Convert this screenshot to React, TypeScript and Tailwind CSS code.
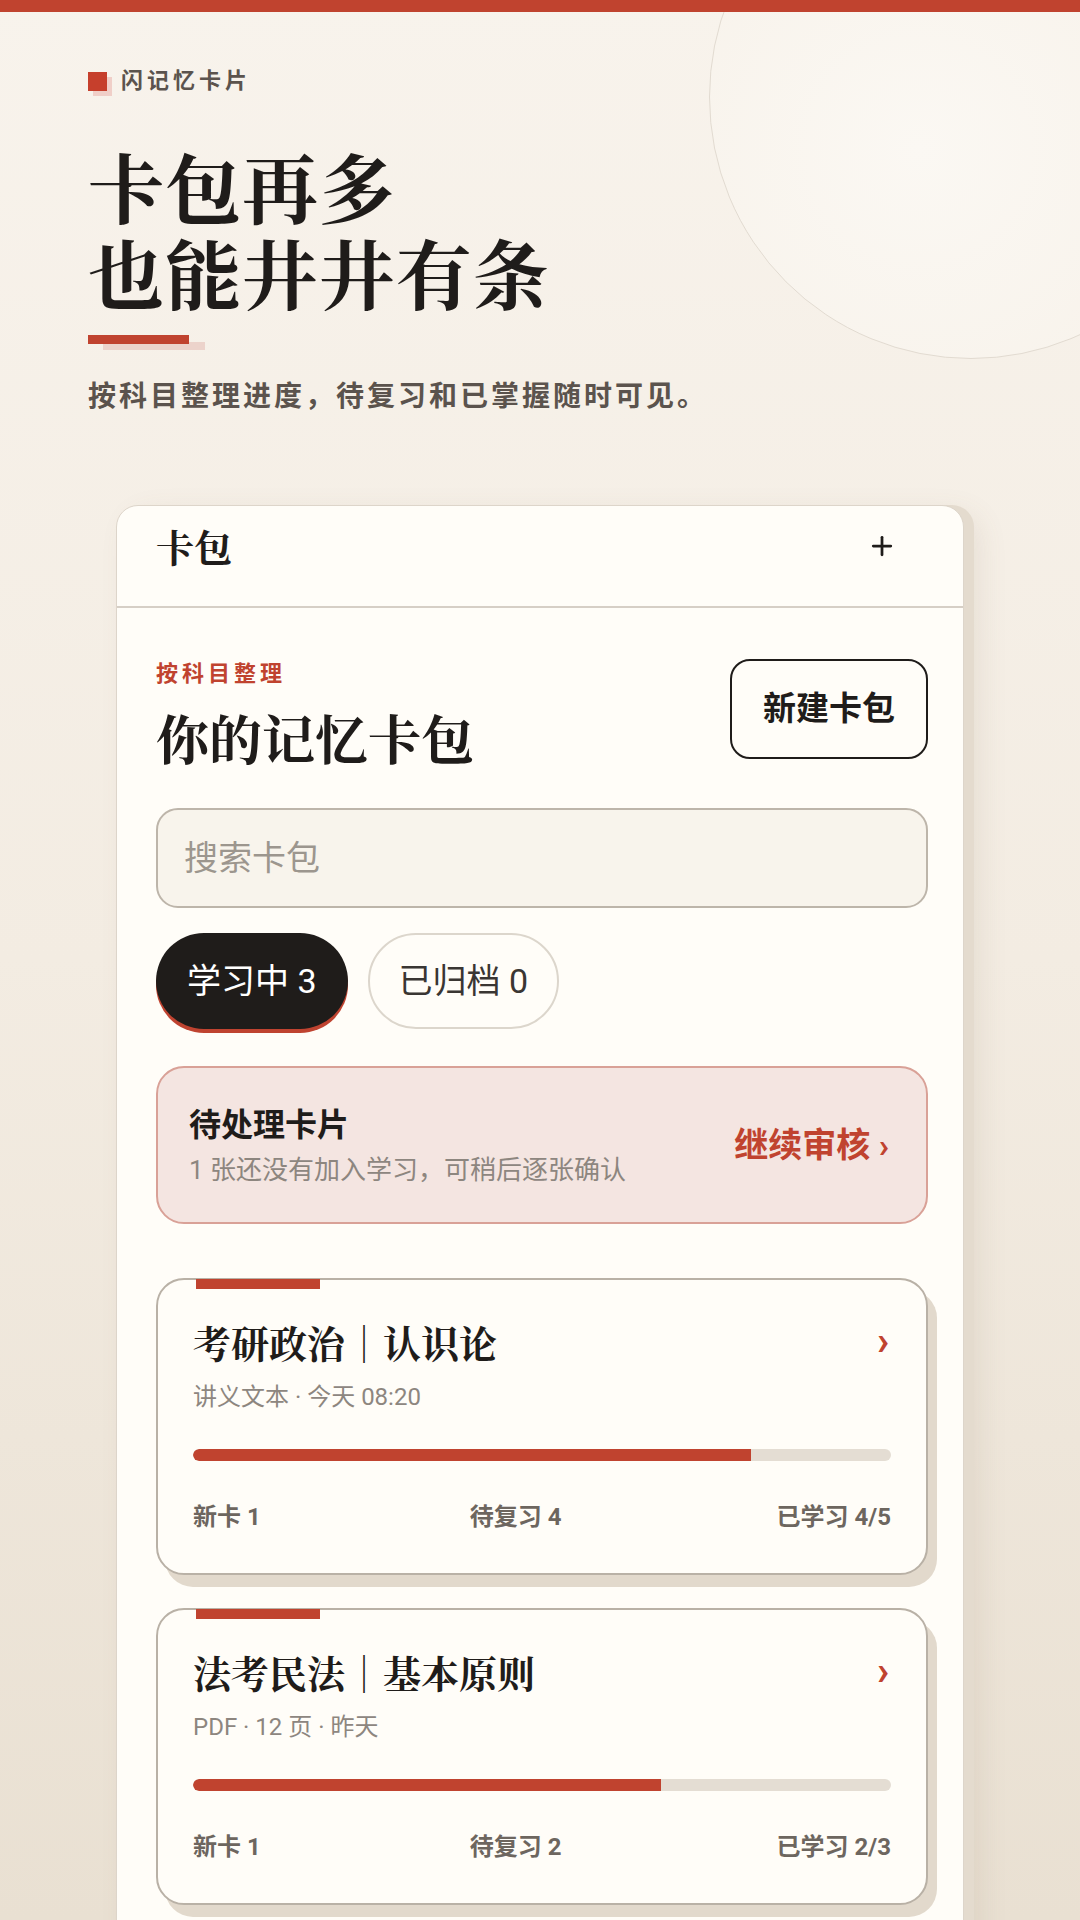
import { Plus } from 'lucide-react';

const sans = 'font-[Roboto,"Noto_Sans_CJK_SC",sans-serif]';
const serif = 'font-["Noto_Serif_CJK_SC","Source_Han_Serif_SC","Noto_Sans_CJK_SC",serif]';

const decks = [
  { title: '考研政治｜认识论', meta: '讲义文本 · 今天 08:20', progress: 80, fresh: 1, review: 4, done: '4/5' },
  { title: '法考民法｜基本原则', meta: 'PDF · 12 页 · 昨天', progress: 67, fresh: 1, review: 2, done: '2/3' },
];

function DeckCard({ deck }: { deck: (typeof decks)[number] }) {
  return (
    <div className="relative rounded-[28px] border-2 border-[#b9b1a6] bg-[#fffdf8] shadow-[9px_12px_0_#e2d9cc] px-[35px] pt-[36px] pb-[41px]">
      {/* red tab on top edge */}
      <div className="absolute -top-[1px] left-[38px] w-[124px] h-[10px] bg-[#c0432f]" />
      <div className="flex items-center justify-between">
        <h3 className={`${serif} text-[38px] leading-[52px] font-bold text-[#1f1c1a]`}>{deck.title}</h3>
        <span className="text-[#c0432f] text-[40px] leading-none font-bold pr-[2px]">›</span>
      </div>
      <p className="mt-[14px] text-[24px] leading-[30px] text-[#8d867f]">{deck.meta}</p>
      <div className="mt-[37px] h-[12px] w-full rounded-full bg-[#e4ddd3] overflow-hidden">
        <div className="h-full bg-[#c0432f] rounded-l-full" style={{ width: `${deck.progress}%` }} />
      </div>
      <div className="mt-[41px] flex justify-between text-[24px] leading-[30px] font-bold text-[#6d665f]">
        <span>新卡 {deck.fresh}</span>
        <span className="pr-[6px]">待复习 {deck.review}</span>
        <span>已学习 {deck.done}</span>
      </div>
    </div>
  );
}

export default function App() {
  return (
    <div className={`${sans} relative w-[1080px] h-[1920px] overflow-hidden bg-gradient-to-b from-[#f8f3ec] via-[#f3ece2] to-[#e9e0d2]`}>
      {/* decorative circle */}
      <div className="absolute left-[709px] -top-[165px] w-[524px] h-[524px] rounded-full border border-[#e2dbd1] bg-[radial-gradient(circle_at_40%_60%,#fbf8f3,#f6f0e7)]" />

      <div className="relative h-[12px] bg-[#c0432f]" />

      <div className="relative px-[88px]">
        {/* brand */}
        <div className="mt-[57px] flex items-center gap-[14px]">
          <div className="relative w-[19px] h-[19px]">
            <div className="absolute left-[5px] top-[5px] w-[19px] h-[19px] bg-[#f0cfc8]" />
            <div className="absolute inset-0 bg-[#c63f2c]" />
          </div>
          <span className="text-[22px] leading-[24px] font-bold tracking-[4px] text-[#5b534d]">闪记忆卡片</span>
        </div>

        {/* headline */}
        <h1 className={`${serif} mt-[50px] text-[76px] font-bold tracking-[1px] text-[#1f1c1a]`}>
          <div className="leading-[86px]">卡包再多</div>
          <div className="leading-[86px]">也能井井有条</div>
        </h1>

        <div className="relative mt-[20px] h-[16px] w-[120px]">
          <div className="absolute left-[15px] top-[7px] w-[102px] h-[8px] bg-[#ecd3cb]" />
          <div className="absolute left-0 top-0 w-[101px] h-[9px] bg-[#c0432f]" />
        </div>

        <p className="mt-[28px] text-[28px] leading-[36px] font-bold tracking-[3px] text-[#5b534d]">
          按科目整理进度，待复习和已掌握随时可见。
        </p>
      </div>

      {/* panel */}
      <div className="relative ml-[116px] mt-[90px] w-[848px] rounded-t-[22px] border border-[#ddd5ca] bg-[#fffdf8] shadow-[10px_0_0_#e4dbce,14px_10px_30px_rgba(120,100,70,0.12)]">
        <div className="flex items-start justify-between h-[102px] pt-[15px] pl-[39px] pr-[66px] border-b-2 border-[#d6cfc6]">
          <span className={`${serif} text-[38px] leading-[50px] font-bold text-[#1f1c1a]`}>卡包</span>
          <Plus size={30} strokeWidth={2.2} className="mt-[10px] text-[#1f1c1a]" />
        </div>

        <div className="pl-[39px] pr-[35px] pt-[51px] pb-[40px]">
          <div className="flex items-start justify-between">
            <div>
              <div className="mt-[2px] text-[22px] leading-[26px] font-bold tracking-[4px] text-[#c0432f]">按科目整理</div>
              <h2 className={`${serif} mt-[20px] text-[53px] leading-[60px] font-bold text-[#1f1c1a]`}>你的记忆卡包</h2>
            </div>
            <button className="w-[198px] h-[100px] rounded-[20px] border-2 border-[#1f1c1a] text-[33px] font-bold text-[#1f1c1a]">
              新建卡包
            </button>
          </div>

          <div className="mt-[41px] h-[100px] rounded-[22px] border-2 border-[#bdb5aa] bg-[#f8f4ec] flex items-center px-[26px]">
            <span className="text-[34px] text-[#9c968e]">搜索卡包</span>
          </div>

          <div className="mt-[25px] flex gap-[20px]">
            <div className="h-[96px] px-[31px] rounded-full bg-[#1f1c1a] shadow-[0_4px_0_#bf4330] flex items-center text-[34px] text-white">
              学习中 3
            </div>
            <div className="h-[96px] px-[29px] rounded-full border-2 border-[#dcd6cc] flex items-center text-[34px] text-[#3a3633]">
              已归档 0
            </div>
          </div>

          <div className="mt-[37px] h-[158px] rounded-[28px] border-2 border-[#d9a197] bg-[#f4e5e1] flex items-center justify-between pl-[31px] pr-[37px]">
            <div>
              <div className="text-[32px] leading-[40px] font-bold text-[#1f1c1a]">待处理卡片</div>
              <div className="mt-[9px] text-[26px] leading-[32px] text-[#8d867f]">1 张还没有加入学习，可稍后逐张确认</div>
            </div>
            <div className="text-[34px] font-bold text-[#c0432f]">继续审核 ›</div>
          </div>

          <div className="mt-[54px] flex flex-col gap-[33px]">
            {decks.map((d) => (
              <DeckCard key={d.title} deck={d} />
            ))}
          </div>
        </div>
      </div>
    </div>
  );
}
